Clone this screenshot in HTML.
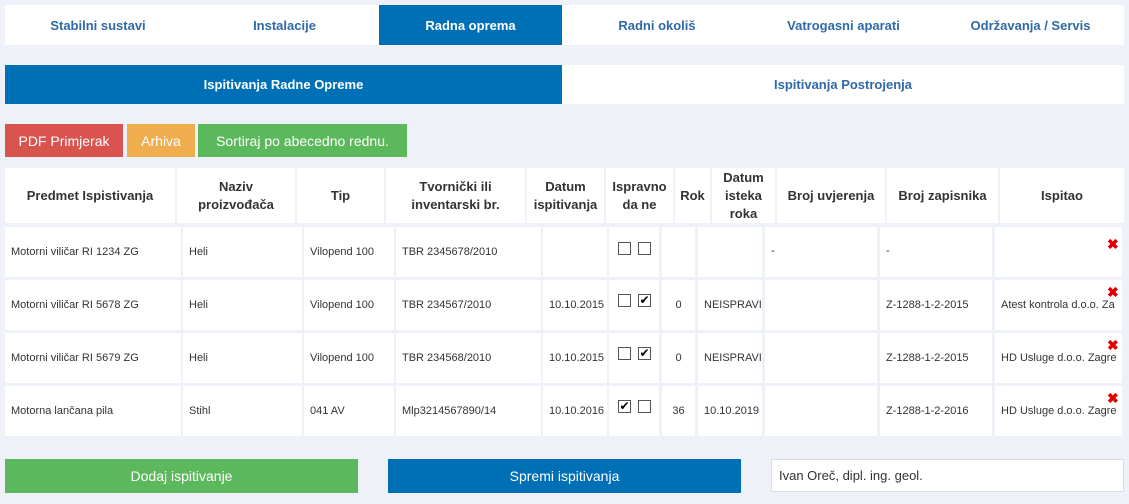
<!DOCTYPE html>
<html><head><meta charset="utf-8"><style>
*{box-sizing:border-box;margin:0;padding:0}
body{width:1129px;height:504px;background:#eef1f8;font-family:"Liberation Sans",sans-serif;position:relative;overflow:hidden}
.a{position:absolute}
.w{background:#fff}
.tab{position:absolute;top:5px;height:40px;display:flex;align-items:center;justify-content:center;font-weight:bold;font-size:13px;color:#2f6aa8}
.blue{background:#0070b6;color:#fff}
.btn{position:absolute;top:124px;height:33px;color:#fff;font-size:14px;display:flex;align-items:center;justify-content:center}
.h{position:absolute;top:168px;height:55px;background:#fff;font-weight:bold;font-size:13px;color:#333;display:flex;align-items:center;justify-content:center;text-align:center;line-height:18px}
.c{position:absolute;background:#fff;font-size:11px;color:#333;display:flex;align-items:center;padding-left:6px;white-space:nowrap;overflow:hidden}
.cb{position:absolute;width:13px;height:13px;border:1px solid #555;background:#fff;font-size:12px;line-height:11px;text-align:center;color:#000}
.x{position:absolute;color:#e00000;font-weight:bold;font-size:14px}
</style></head><body>
<div class="a w" style="left:5px;top:5px;width:1119px;height:40px"></div>
<div class="tab" style="left:5px;width:186px">Stabilni sustavi</div>
<div class="tab" style="left:191px;width:187px">Instalacije</div>
<div class="tab blue" style="left:379px;width:183px">Radna oprema</div>
<div class="tab" style="left:564px;width:186px">Radni okoliš</div>
<div class="tab" style="left:750px;width:187px">Vatrogasni aparati</div>
<div class="tab" style="left:937px;width:187px">Održavanja / Servis</div>

<div class="a w" style="left:5px;top:65px;width:1119px;height:39px"></div>
<div class="tab blue" style="left:5px;top:65px;height:39px;width:557px">Ispitivanja Radne Opreme</div>
<div class="tab" style="left:562px;top:65px;height:39px;width:562px">Ispitivanja Postrojenja</div>

<div class="btn" style="left:5px;width:118px;background:#d9534f">PDF Primjerak</div>
<div class="btn" style="left:127px;width:68px;background:#f0ad4e">Arhiva</div>
<div class="btn" style="left:198px;width:209px;background:#5cb85c">Sortiraj po abecedno rednu.</div>

<div class="h" style="left:5px;width:170px">Predmet Ispistivanja</div>
<div class="h" style="left:177px;width:118px">Naziv<br>proizvođača</div>
<div class="h" style="left:297px;width:87px">Tip</div>
<div class="h" style="left:386px;width:139px">Tvornički ili<br>inventarski br.</div>
<div class="h" style="left:527px;width:77px">Datum<br>ispitivanja</div>
<div class="h" style="left:606px;width:67px">Ispravno<br>da ne</div>
<div class="h" style="left:675px;width:35px">Rok</div>
<div class="h" style="left:712px;width:63px">Datum<br>isteka<br>roka</div>
<div class="h" style="left:777px;width:108px">Broj uvjerenja</div>
<div class="h" style="left:887px;width:111px">Broj zapisnika</div>
<div class="h" style="left:1000px;width:124px">Ispitao</div>

<div id="rows"></div>
<script>
var cols=[[5,176],[183,119],[304,90],[396,145],[543,64],[609,50],[662,33],[698,64],[765,112],[880,112],[995,127]];
var data=[
["Motorni viličar RI 1234 ZG","Heli","Vilopend 100","TBR 2345678/2010","",[0,0],"","","-","-",""],
["Motorni viličar RI 5678 ZG","Heli","Vilopend 100","TBR 234567/2010","10.10.2015",[0,1],"0","NEISPRAVI","","Z-1288-1-2-2015","Atest kontrola d.o.o. Za"],
["Motorni viličar RI 5679 ZG","Heli","Vilopend 100","TBR 234568/2010","10.10.2015",[0,1],"0","NEISPRAVI","","Z-1288-1-2-2015","HD Usluge d.o.o. Zagre"],
["Motorna lančana pila","Stihl","041 AV","Mlp3214567890/14","10.10.2016",[1,0],"36","10.10.2019","","Z-1288-1-2-2016","HD Usluge d.o.o. Zagre"]];
var tops=[227,280,333,386],h='';
data.forEach(function(r,i){var t=tops[i];
cols.forEach(function(c,j){var v=r[j];
if(j==5){h+='<div class="c" style="left:'+c[0]+'px;top:'+t+'px;width:'+c[1]+'px;height:50px"></div>';
var cy=t+(i==0?15:14);
h+='<div class="cb" style="left:618px;top:'+cy+'px">'+(v[0]?'✔':'')+'</div><div class="cb" style="left:638px;top:'+cy+'px">'+(v[1]?'✔':'')+'</div>';return;}
var st=(j==6)?'justify-content:center;padding-left:0;':'';
var pt=(i==0&&(j==8||j==9))?'padding-bottom:2px;':'';
h+='<div class="c" style="'+st+pt+'left:'+c[0]+'px;top:'+t+'px;width:'+c[1]+'px;height:50px">'+v+'</div>';});
h+='<div class="x" style="left:1107px;top:'+(t+(i==0?9:4))+'px">✖</div>';});
document.getElementById('rows').innerHTML=h;
</script>

<div class="a" style="left:5px;top:459px;width:353px;height:34px;background:#5cb85c;color:#fff;font-size:14px;display:flex;align-items:center;justify-content:center">Dodaj ispitivanje</div>
<div class="a" style="left:388px;top:459px;width:353px;height:34px;background:#0070b6;color:#fff;font-size:14px;display:flex;align-items:center;justify-content:center">Spremi ispitivanja</div>
<div class="a" style="left:771px;top:459px;width:353px;height:33px;background:#fff;border:1px solid #ddd;color:#333;font-size:13px;display:flex;align-items:center;padding-left:7px">Ivan Oreč, dipl. ing. geol.</div>
</body></html>
